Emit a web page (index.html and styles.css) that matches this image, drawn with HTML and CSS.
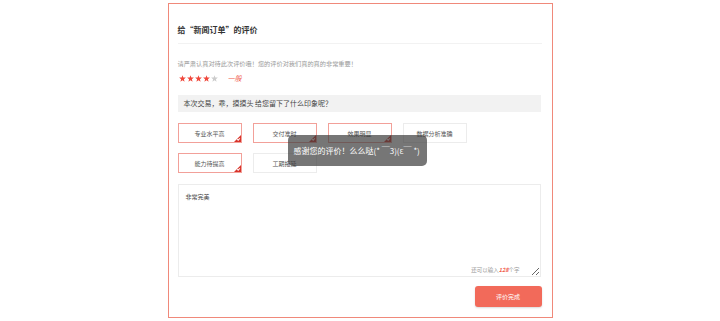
FILE: index.html
```html
<!DOCTYPE html>
<html lang="zh-CN">
<head>
    <meta charset="UTF-8">
    <meta name="viewport" content="width=device-width, initial-scale=1.0">
    <title>评价</title>
    <link rel="stylesheet" href="styles.css">
</head>
<body>

    <div class="panel">
        <div class="title">给“新闻订单”的评价</div>

        <div class="tip">请严肃认真对待此次评价哦！您的评价对我们真的真的非常重要！</div>

        <div class="rating">
            <svg class="star on" viewBox="0 0 10 10"><polygon points="5,0.3 6.2,3.6 9.8,3.7 7,5.9 8,9.5 5,7.4 2,9.5 3,5.9 0.2,3.7 3.8,3.6"/></svg>
            <svg class="star on" viewBox="0 0 10 10"><polygon points="5,0.3 6.2,3.6 9.8,3.7 7,5.9 8,9.5 5,7.4 2,9.5 3,5.9 0.2,3.7 3.8,3.6"/></svg>
            <svg class="star on" viewBox="0 0 10 10"><polygon points="5,0.3 6.2,3.6 9.8,3.7 7,5.9 8,9.5 5,7.4 2,9.5 3,5.9 0.2,3.7 3.8,3.6"/></svg>
            <svg class="star on" viewBox="0 0 10 10"><polygon points="5,0.3 6.2,3.6 9.8,3.7 7,5.9 8,9.5 5,7.4 2,9.5 3,5.9 0.2,3.7 3.8,3.6"/></svg>
            <svg class="star" viewBox="0 0 10 10"><polygon points="5,0.3 6.2,3.6 9.8,3.7 7,5.9 8,9.5 5,7.4 2,9.5 3,5.9 0.2,3.7 3.8,3.6"/></svg>
            <span class="rating-label">一般</span>
        </div>

        <div class="question">本次交易，乖，摸摸头 给您留下了什么印象呢？</div>

        <div class="tags">
            <span class="tag selected">专业水平高</span>
            <span class="tag selected">交付准时</span>
            <span class="tag selected">效果明显</span>
            <span class="tag">数据分析准确</span>
            <span class="tag selected">能力待提高</span>
            <span class="tag">工期拖延</span>
        </div>

        <div class="comment">
            <textarea class="comment-box">非常完美</textarea>
            <div class="counter">还可以输入<em>128</em>个字</div>
        </div>

        <div class="actions">
            <button class="submit">评价完成</button>
        </div>

        <div class="toast">感谢您的评价！么么哒(* ￣3)(ε￣ *)</div>
    </div>

</body>
</html>
```

FILE: styles.css
```css
body {
    margin: 0;
    padding: 0;
    font-family: "Noto Sans CJK SC", "Noto Sans", sans-serif;
    background: #ffffff;
    color: #333333;
}

.panel {
    position: relative;
    width: 364px;
    margin: 3px auto 0;
    padding: 20px 10px 10px 9px;
    border: 1px solid #f0897a;
}

.title {
    font-size: 8px;
    font-weight: bold;
    line-height: 12px;
    color: #333333;
    padding-bottom: 7px;
    border-bottom: 1px solid #f2f2f2;
}

.tip {
    margin-top: 15px;
    font-size: 6.2px;
    line-height: 10px;
    color: #999999;
}

.rating {
    display: flex;
    align-items: center;
    gap: 1px;
    height: 10px;
    margin-top: 4px;
    padding-left: 1px;
}

.star {
    width: 7px;
    height: 7px;
    fill: #cccccc;
}

.star.on {
    fill: #f0483c;
}

.rating-label {
    margin-left: 9px;
    font-size: 7px;
    font-style: italic;
    color: #f05a4a;
}

.question {
    margin-top: 12px;
    height: 17px;
    line-height: 17px;
    padding-left: 6px;
    background: #f2f2f2;
    font-size: 7px;
    color: #444444;
    margin-right: 1px;
}

.tags {
    display: grid;
    grid-template-columns: repeat(4, 64px);
    column-gap: 11px;
    row-gap: 10px;
    margin-top: 11px;
}

.tag {
    position: relative;
    height: 20px;
    box-sizing: border-box;
    border: 1px solid #ececec;
    display: flex;
    align-items: center;
    justify-content: center;
    font-size: 6px;
    color: #555555;
}

.tag.selected {
    border-color: #f2a099;
}

.tag.selected::after {
    content: "";
    position: absolute;
    right: 0;
    bottom: 0;
    border-style: solid;
    border-width: 0 0 7px 7px;
    border-color: transparent transparent #d8332a transparent;
}

.tag.selected::before {
    content: "";
    position: absolute;
    right: 1px;
    bottom: 2px;
    width: 2px;
    height: 1px;
    border-left: 1px solid #ffffff;
    border-bottom: 1px solid #ffffff;
    transform: rotate(-45deg);
    z-index: 1;
}

.comment {
    position: relative;
    margin-top: 11px;
    margin-right: 1px;
}

.comment-box {
    display: block;
    width: 100%;
    height: 93px;
    box-sizing: border-box;
    margin: 0;
    padding: 7px 7px;
    border: 1px solid #ececec;
    outline: none;
    font-family: inherit;
    font-size: 6px;
    line-height: 10px;
    color: #444444;
    resize: vertical;
}

.counter {
    position: absolute;
    right: 21px;
    bottom: 3px;
    font-size: 5.5px;
    color: #999999;
}

.counter em {
    color: #f05a4a;
    font-weight: bold;
}

.actions {
    display: flex;
    justify-content: flex-end;
    margin-top: 9px;
}

.submit {
    width: 67px;
    height: 21px;
    border: none;
    border-radius: 3px;
    background: #f26a5a;
    box-shadow: 0 1px 2px rgba(0, 0, 0, 0.15);
    color: #ffffff;
    font-family: inherit;
    font-size: 6px;
    cursor: pointer;
    padding: 0;
}

.toast {
    position: absolute;
    z-index: 5;
    left: 119px;
    top: 131px;
    width: 139px;
    height: 31px;
    box-sizing: border-box;
    padding-left: 6px;
    display: flex;
    align-items: center;
    border-radius: 5px;
    background: rgba(60, 60, 60, 0.7);
    color: #ffffff;
    font-size: 8px;
    white-space: nowrap;
}
```
